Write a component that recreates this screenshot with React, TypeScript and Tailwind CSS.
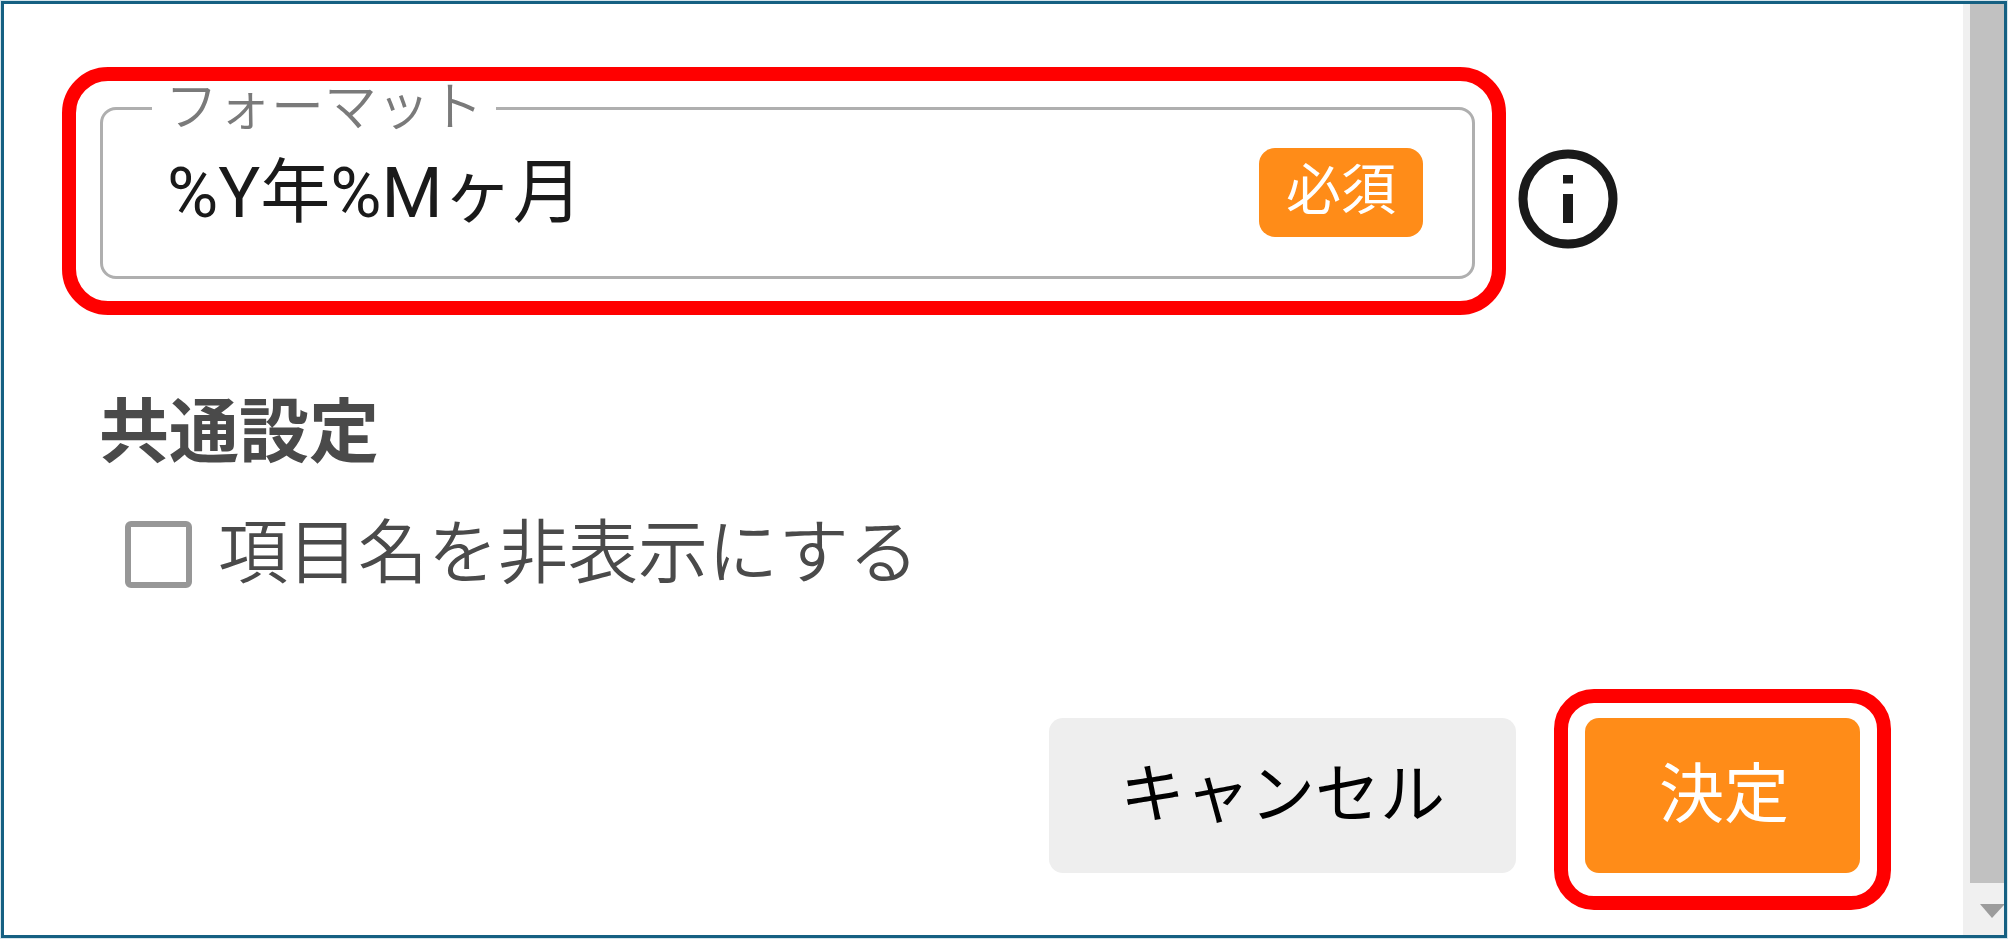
import { useState } from "react";

function InfoIcon() {
  return (
    <svg viewBox="0 0 100 100" className="size-[100px]" aria-hidden="true">
      <circle cx="50" cy="50" r="45" fill="none" stroke="#1a1a1a" strokeWidth="9" />
      <rect x="45" y="26" width="10" height="8.5" fill="#1a1a1a" />
      <rect x="45" y="45" width="10" height="29" fill="#1a1a1a" />
    </svg>
  );
}

function ScrollBar() {
  return (
    <div aria-hidden="true" className="flex w-[41px] shrink-0 flex-col bg-[#f0f0f0]">
      <div className="ml-[7px] flex-1 bg-[#c1c1c1]" />
      <div className="flex h-[52px] items-center justify-end pt-[4px]">
        <svg viewBox="0 0 24 14" className="h-[14px] w-[24px]">
          <path d="M0 0H24V1L12 14Z" fill="#9c9c9c" />
        </svg>
      </div>
    </div>
  );
}

export default function App() {
  const [format, setFormat] = useState("%Y年%Mヶ月");
  const [hidden, setHidden] = useState(false);

  return (
    <div className="flex min-h-screen bg-[#d5e5ec] p-px font-['Roboto','Noto_Sans_CJK_JP',sans-serif] font-normal">
      <div className="flex flex-1 border-[3px] border-[#156082] bg-white">
        <main className="flex min-w-0 flex-1 flex-col pt-[63px] pb-[25px]">
          <div className="flex items-center gap-[12px] pr-[345px] pl-[58px]">
            <div className="min-w-0 flex-1 rounded-[46px] border-[14px] border-[#ff0000] pt-[2px] pr-[17px] pb-[22px] pl-[24px]">
              <fieldset className="h-[196px] min-w-0 rounded-[16px] border-[3px] border-[#afafaf] pt-[14px] pr-[49px] pl-[64px]">
                <legend className="-ml-[15px] px-[13px] text-[53px] leading-[51px] font-[350] text-[#7a7a7a]">
                  <label htmlFor="format">フォーマット</label>
                </legend>
                <div className="flex items-center">
                  <input
                    id="format"
                    type="text"
                    required
                    value={format}
                    onChange={(e) => setFormat(e.target.value)}
                    className="h-[89px] min-w-0 flex-1 pb-[12px] text-[70px] leading-[77px] text-[#1a1a1a] outline-none"
                  />
                  <span className="rounded-[16px] bg-[#ff8c18] px-[27px] pb-[4px] text-[55px] leading-[85px] text-white">
                    必須
                  </span>
                </div>
              </fieldset>
            </div>
            <button type="button" aria-label="情報" className="shrink-0 pt-[16px]">
              <InfoIcon />
            </button>
          </div>

          <section className="mt-[68px] pl-[95px]">
            <h2 className="text-[70px] leading-[100px] font-bold text-[#4a4a4a]">共通設定</h2>
            <div className="mt-[22px] flex items-center gap-[26px] pl-[26px]">
              <input
                id="hide-name"
                type="checkbox"
                checked={hidden}
                onChange={(e) => setHidden(e.target.checked)}
                className="size-[67px] shrink-0 appearance-none rounded-[6px] border-[6px] border-[#979797] bg-white checked:bg-[#ff8c18]"
              />
              <label htmlFor="hide-name" className="text-[70px] leading-[98px] font-[350] text-[#4a4a4a]">
                項目名を非表示にする
              </label>
            </div>
          </section>

          <div className="mt-auto flex items-start justify-end gap-[38px] pr-[72px]">
            <button
              type="button"
              className="mt-[29px] h-[155px] rounded-[14px] bg-[#eeeeee] px-[71px] text-[65px] text-black"
            >
              キャンセル
            </button>
            <div className="rounded-[40px] border-[14px] border-[#ff0000] px-[17px] pt-[15px] pb-[23px]">
              <button
                type="button"
                className="h-[155px] rounded-[14px] bg-[#ff8c18] pr-[71px] pl-[74px] text-[65px] text-white"
              >
                決定
              </button>
            </div>
          </div>
        </main>
        <ScrollBar />
      </div>
    </div>
  );
}
